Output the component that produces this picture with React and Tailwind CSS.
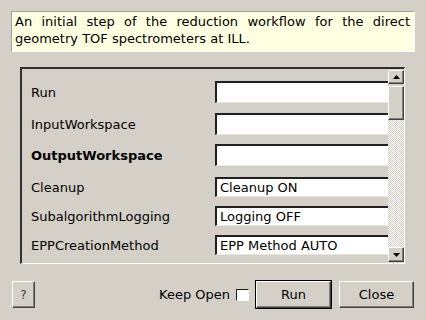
const rows = [
  { label: 'Run', kind: 'input', h: 'h-[22px]', mt: 'mt-[12px]' },
  { label: 'InputWorkspace', kind: 'input', h: 'h-[22px]', mt: 'mt-[10px]' },
  { label: 'OutputWorkspace', kind: 'input', h: 'h-[22px]', mt: 'mt-[9px]', bold: true },
  { label: 'Cleanup', kind: 'combo', value: 'Cleanup ON', h: 'h-[20px]', mt: 'mt-[11px]' },
  { label: 'SubalgorithmLogging', kind: 'combo', value: 'Logging OFF', h: 'h-[20px]', mt: 'mt-[9px]' },
  { label: 'EPPCreationMethod', kind: 'combo', value: 'EPP Method AUTO', h: 'h-[20px]', mt: 'mt-[9px]' },
]

function Field({ row }) {
  return (
    <div className={`flex items-center ${row.mt} ${row.h}`}>
      <div className={`w-[193px] pl-[9px] pt-[2px] shrink-0 ${row.bold ? 'font-bold' : ''}`}>{row.label}</div>
      <div
        className={`w-[200px] shrink-0 ${row.h} bg-white border-t-2 border-l-2 border-t-[#202020] border-l-[#202020] border-b border-b-[#e8e6e0] flex items-center pl-[3px]`}
      >
        {row.value}
      </div>
    </div>
  )
}

function Arrow({ up }) {
  return (
    <svg viewBox="0 0 7 4" className="w-[7px] h-[4px]">
      <path d={up ? 'M0 4 L3.5 0 L7 4 Z' : 'M0 0 L7 0 L3.5 4 Z'} fill="#000" />
    </svg>
  )
}

const raised =
  'border border-t-white border-l-white border-r-[#404040] border-b-[#404040] shadow-[inset_-1px_-1px_0_#808080] bg-[#d4d0c8]'

export default function App() {
  return (
    <div
      className="w-[426px] h-[320px] bg-[#d4d0c8] text-black text-[13px] flex flex-col overflow-hidden"
      style={{ fontFamily: '"DejaVu Sans", Verdana, sans-serif' }}
    >
      <div className="mt-[11px] ml-[11px] w-[404px] h-[41px] bg-[#ffffe1] border-t border-l border-t-[#a0a0a0] border-l-[#a0a0a0] border-r border-b border-r-white border-b-white pl-[3px] pr-[4px] pt-[1px] leading-[17px] text-justify">
        An initial step of the reduction workflow for the direct geometry TOF spectrometers at ILL.
      </div>

      <div className="mt-[15px] ml-[20px] w-[385px] h-[197px] flex border-t-2 border-l-2 border-t-[#303030] border-l-[#303030] border-r border-b border-r-white border-b-white">
        <div className="flex-1 overflow-hidden">
          {rows.map((r) => (
            <Field key={r.label} row={r} />
          ))}
        </div>
        <div className="w-[16px] mt-[1px] mb-[1px] flex flex-col">
          <div className={`h-[14px] flex items-center justify-center ${raised}`}>
            <Arrow up />
          </div>
          <div className={`h-[34px] mt-[2px] ${raised}`} />
          <div className="flex-1 bg-[repeating-conic-gradient(#ffffff_0_25%,#d4d0c8_0_50%)] bg-[length:2px_2px]" />
          <div className={`h-[15px] flex items-center justify-center ${raised}`}>
            <Arrow />
          </div>
        </div>
      </div>

      <div className="mt-[16px] flex items-center h-[29px]">
        <button className={`ml-[12px] w-[23px] h-[27px] text-[12px] text-[#404040] ${raised}`}>?</button>
        <div className="flex-1" />
        <span>Keep Open</span>
        <div className="ml-[6px] w-[13px] h-[12px] bg-white border-t border-l border-t-[#202020] border-l-[#202020] border-r border-b border-r-white border-b-white" />
        <button className="ml-[6px] w-[77px] h-[29px] border border-black">
          <div className={`w-full h-full flex items-center justify-center ${raised}`}>Run</div>
        </button>
        <button className={`ml-[7px] mr-[12px] w-[75px] h-[27px] ${raised}`}>Close</button>
      </div>
    </div>
  )
}
